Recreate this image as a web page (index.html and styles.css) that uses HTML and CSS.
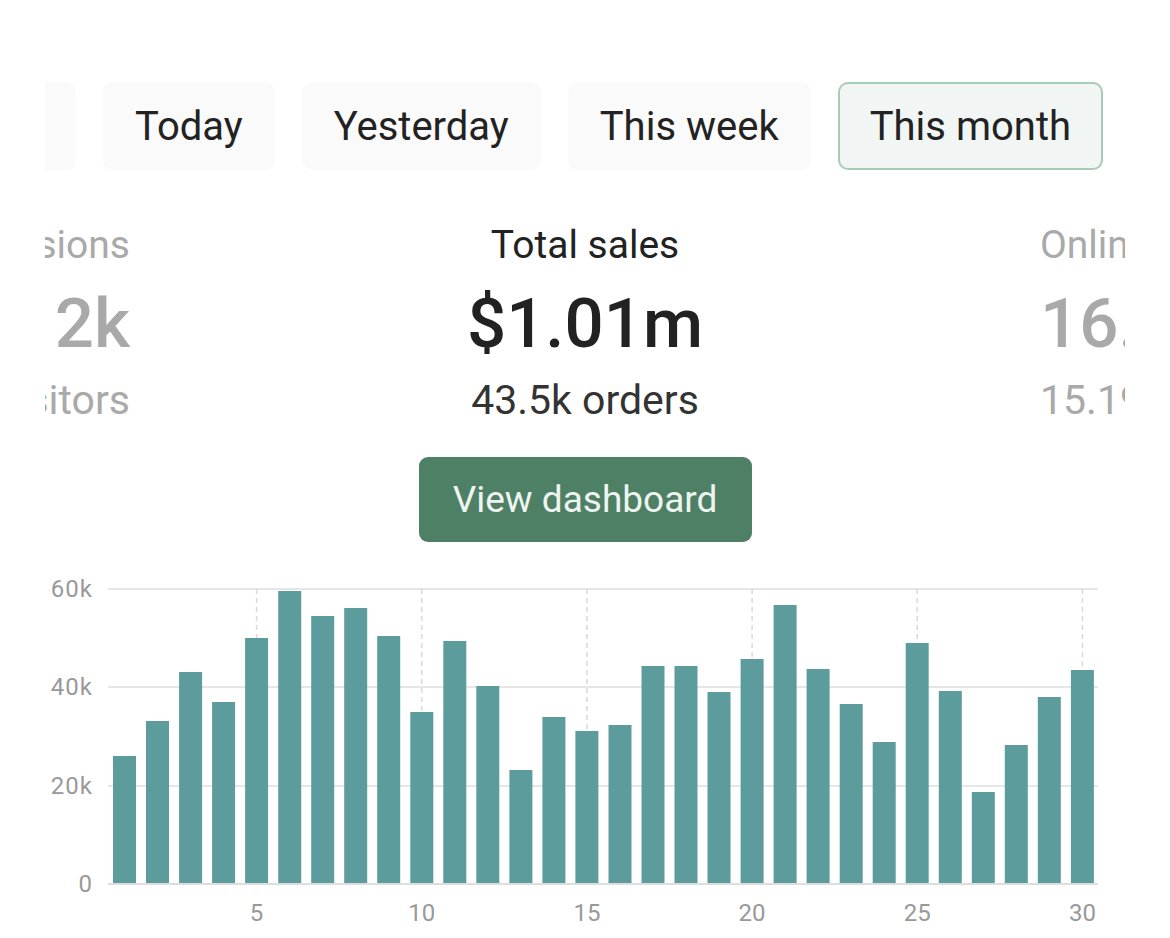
FILE: index.html
```html
<!DOCTYPE html>
<html lang="en">
<head>
<meta charset="utf-8">
<title>Sales overview</title>
<link rel="stylesheet" href="styles.css">
</head>
<body>
<main class="overview">
  <div class="tabs-clip">
    <nav class="tabs">
      <button class="tab">Date range</button>
      <button class="tab">Today</button>
      <button class="tab">Yesterday</button>
      <button class="tab">This week</button>
      <button class="tab tab-active">This month</button>
    </nav>
  </div>

  <section class="stats">
    <div class="stat stat-left">
      <div class="stat-label">Sessions</div>
      <div class="stat-value">2k</div>
      <div class="stat-sub">18.7k visitors</div>
    </div>
    <div class="stat stat-center">
      <div class="stat-label">Total sales</div>
      <div class="stat-value">$1.01m</div>
      <div class="stat-sub">43.5k orders</div>
    </div>
    <div class="stat stat-right">
      <div class="stat-label">Online store sessions</div>
      <div class="stat-value">16.8k</div>
      <div class="stat-sub">15.19k visitors</div>
    </div>
  </section>

  <button class="cta">View dashboard</button>

  <svg class="chart" width="1170" height="368" viewBox="0 570 1170 368" aria-label="Daily sales this month">
    <g class="grid">
      <line x1="108" y1="590" x2="1098" y2="590"/>
      <line x1="108" y1="688" x2="1098" y2="688"/>
      <line x1="108" y1="787" x2="1098" y2="787"/>
    </g>
    <g class="ticks">
      <line x1="256.6" y1="590" x2="256.6" y2="885"/>
      <line x1="421.8" y1="590" x2="421.8" y2="885"/>
      <line x1="586.9" y1="590" x2="586.9" y2="885"/>
      <line x1="752.1" y1="590" x2="752.1" y2="885"/>
      <line x1="917.2" y1="590" x2="917.2" y2="885"/>
      <line x1="1082.4" y1="590" x2="1082.4" y2="885"/>
    </g>
    <g class="bars">
      <rect x="113" y="757" width="23" height="128"/>
      <rect x="146" y="722" width="23" height="163"/>
      <rect x="179.1" y="673" width="23" height="212"/>
      <rect x="212.1" y="703" width="23" height="182"/>
      <rect x="245.1" y="639" width="23" height="246"/>
      <rect x="278.2" y="592" width="23" height="293"/>
      <rect x="311.2" y="617" width="23" height="268"/>
      <rect x="344.2" y="609" width="23" height="276"/>
      <rect x="377.2" y="637" width="23" height="248"/>
      <rect x="410.3" y="713" width="23" height="172"/>
      <rect x="443.3" y="642" width="23" height="243"/>
      <rect x="476.3" y="687" width="23" height="198"/>
      <rect x="509.4" y="771" width="23" height="114"/>
      <rect x="542.4" y="718" width="23" height="167"/>
      <rect x="575.4" y="732" width="23" height="153"/>
      <rect x="608.5" y="726" width="23" height="159"/>
      <rect x="641.5" y="667" width="23" height="218"/>
      <rect x="674.5" y="667" width="23" height="218"/>
      <rect x="707.5" y="693" width="23" height="192"/>
      <rect x="740.6" y="660" width="23" height="225"/>
      <rect x="773.6" y="606" width="23" height="279"/>
      <rect x="806.6" y="670" width="23" height="215"/>
      <rect x="839.7" y="705" width="23" height="180"/>
      <rect x="872.7" y="743" width="23" height="142"/>
      <rect x="905.7" y="644" width="23" height="241"/>
      <rect x="938.8" y="692" width="23" height="193"/>
      <rect x="971.8" y="793" width="23" height="92"/>
      <rect x="1004.8" y="746" width="23" height="139"/>
      <rect x="1037.8" y="698" width="23" height="187"/>
      <rect x="1070.9" y="671" width="23" height="214"/>
    </g>
    <line class="axis" x1="108" y1="885" x2="1098" y2="885"/>
    <g class="y-labels">
      <text x="93" y="598">60k</text>
      <text x="93" y="696">40k</text>
      <text x="93" y="795">20k</text>
      <text x="93" y="893">0</text>
    </g>
    <g class="x-labels">
      <text x="256.6" y="922">5</text>
      <text x="421.8" y="922">10</text>
      <text x="586.9" y="922">15</text>
      <text x="752.1" y="922">20</text>
      <text x="917.2" y="922">25</text>
      <text x="1082.4" y="922">30</text>
    </g>
  </svg>
</main>
</body>
</html>
```

FILE: styles.css
```css
* {
  box-sizing: border-box;
}

html, body {
  margin: 0;
  padding: 0;
  background: #ffffff;
}

body {
  font-family: Roboto, "Noto Sans", "Liberation Sans", sans-serif;
  color: #222222;
  width: 1170px;
  height: 938px;
  overflow: hidden;
}

.overview {
  display: flex;
  flex-direction: column;
}

/* Period picker: a horizontally scrolled strip, anchored to its right end */
.tabs-clip {
  margin: 82px 0 0 45px;
  width: 1080px;
  overflow: hidden;
}

.tabs {
  display: flex;
  justify-content: flex-end;
  gap: 27px;
  padding-right: 22px;
}

.tab {
  flex-shrink: 0;
  height: 88px;
  padding: 0 32px;
  border: none;
  border-radius: 10px;
  background: #fafafa;
  font-family: inherit;
  font-size: 40px;
  font-weight: 400;
  color: #222222;
  white-space: nowrap;
}

.tab-active {
  padding: 0 30px;
  border: 2px solid #a8cab9;
  background: #f1f6f4;
}

/* Metric carousel: centre card in focus, neighbours peeking from the edges */
.stats {
  margin: 52px 0 0 45px;
  width: 1080px;
  overflow: hidden;
  display: grid;
  grid-template-columns: 85px 1fr 85px;
}

.stat {
  display: flex;
  flex-direction: column;
  white-space: nowrap;
  min-width: 0;
}

.stat-left {
  align-items: flex-end;
  color: #a9a9a9;
}

.stat-center {
  align-items: center;
  color: #222222;
}

.stat-right {
  align-items: flex-start;
  color: #a9a9a9;
}

.stat-label {
  font-size: 39px;
  line-height: 47px;
}

.stat-value {
  margin-top: 14px;
  font-size: 69px;
  line-height: 82px;
  font-weight: 500;
}

.stat-sub {
  margin-top: 11px;
  font-size: 41px;
  line-height: 49px;
}

.stat-center .stat-sub {
  color: #333333;
}

.cta {
  align-self: center;
  margin-top: 32px;
  width: 333px;
  height: 85px;
  border: none;
  border-radius: 9px;
  background: #4e8065;
  color: #eef4ef;
  font-family: inherit;
  font-size: 37px;
  font-weight: 400;
}

/* Daily sales bar chart */
.chart {
  display: block;
  margin-top: 27px;
}

.grid line {
  stroke: #e6e6e6;
  stroke-width: 2;
}

.ticks line {
  stroke: #d9d9d9;
  stroke-width: 1.5;
  stroke-dasharray: 5 4;
}

.bars rect {
  fill: #5c9c9d;
}

.axis {
  stroke: #dddddd;
  stroke-width: 2;
}

.y-labels text,
.x-labels text {
  font-family: Roboto, "Noto Sans", sans-serif;
  font-size: 24px;
  fill: #999999;
}

.y-labels text {
  text-anchor: end;
  letter-spacing: 1px;
}

.x-labels text {
  text-anchor: middle;
}
```
